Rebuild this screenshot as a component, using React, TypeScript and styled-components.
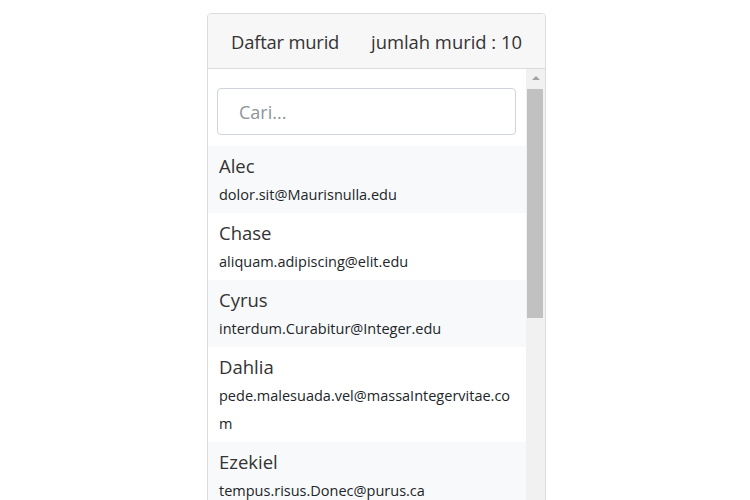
import React, { useState } from "react";
import styled, { createGlobalStyle } from "styled-components";

interface Murid {
  name: string;
  email: string;
}

const students: Murid[] = [
  { name: "Alec", email: "dolor.sit@Maurisnulla.edu" },
  { name: "Chase", email: "aliquam.adipiscing@elit.edu" },
  { name: "Cyrus", email: "interdum.Curabitur@Integer.edu" },
  { name: "Dahlia", email: "pede.malesuada.vel@massaIntegervitae.com" },
  { name: "Ezekiel", email: "tempus.risus.Donec@purus.ca" },
  { name: "Hedy", email: "lorem.ipsum@sodales.org" },
  { name: "Kirby", email: "nec.tempus@Nullamvelit.net" },
  { name: "Leila", email: "ac.mattis@consequat.co.uk" },
  { name: "Odessa", email: "felis.purus@ametrisus.com" },
  { name: "Zane", email: "vitae.erat@euismod.edu" },
];

const GlobalStyle = createGlobalStyle`
  html, body {
    margin: 0;
    overflow: hidden;
    background: #fff;
  }
  body {
    font-family: "Open Sans", "Noto Sans", sans-serif;
    color: #212529;
  }
`;

const Page = styled.div`
  display: flex;
  justify-content: center;
  padding: 13px 0 0 3px;
`;

const Card = styled.div`
  width: 337px;
  border: 1px solid #dcdcdc;
  border-radius: 4px;
  background: #fff;
  overflow: hidden;
`;

const Header = styled.div`
  display: flex;
  justify-content: space-between;
  align-items: center;
  height: 54px;
  padding: 0 23px 0 23px;
  background: #f7f7f7;
  border-bottom: 1px solid #dcdcdc;
  font-size: 18.4px;
  color: #333;
  letter-spacing: -0.2px;
`;

const Count = styled.span`
  letter-spacing: 0;
`;

const Body = styled.div`
  display: flex;
  height: 440px;
`;

const Content = styled.div`
  flex: 1;
  min-width: 0;
  overflow: hidden;
`;

const ScrollTrack = styled.div`
  display: flex;
  flex-direction: column;
  width: 19px;
  background: #f1f1f1;
`;

const ScrollArrow = styled.div`
  display: flex;
  justify-content: center;
  align-items: center;
  height: 17px;
  padding-left: 1px;

  &::before {
    content: "";
    border-left: 4px solid transparent;
    border-right: 4px solid transparent;
    border-bottom: 4px solid #a3a3a3;
  }
`;

const ScrollThumb = styled.div`
  height: 229px;
  margin: 3px 2px 0 1px;
  background: #c1c1c1;
`;

const SearchWrap = styled.div`
  padding: 19px 10px 11px 9px;
`;

const Search = styled.input`
  box-sizing: border-box;
  width: 100%;
  height: 47px;
  padding: 0 21px;
  border: 1px solid #ced4da;
  border-radius: 4px;
  font-family: inherit;
  font-size: 18px;
  color: #495057;
  outline: none;

  &::placeholder {
    color: #8e959b;
  }
`;

const List = styled.ul`
  list-style: none;
  margin: 0;
  padding: 0;
`;

const Item = styled.li<{ $striped: boolean }>`
  padding: 6px 11px 4px;
  background: ${(p) => (p.$striped ? "#f8f9fa" : "#fff")};
`;

const Name = styled.div`
  font-size: 18.5px;
  line-height: 28px;
  color: #333;
`;

const Email = styled.div`
  margin-top: 1px;
  font-size: 14.5px;
  line-height: 28px;
  color: #212529;
  word-break: break-all;
`;

export default function App() {
  const [query, setQuery] = useState("");
  const shown = students.filter((s) =>
    s.name.toLowerCase().includes(query.toLowerCase())
  );

  return (
    <>
      <GlobalStyle />
      <Page>
        <Card>
          <Header>
            <span>Daftar murid</span>
            <Count>jumlah murid : {students.length}</Count>
          </Header>
          <Body>
            <Content>
              <SearchWrap>
                <Search
                  placeholder="Cari..."
                  value={query}
                  onChange={(e) => setQuery(e.target.value)}
                />
              </SearchWrap>
              <List>
                {shown.map((s, i) => (
                  <Item key={s.email} $striped={i % 2 === 0}>
                    <Name>{s.name}</Name>
                    <Email>{s.email}</Email>
                  </Item>
                ))}
              </List>
            </Content>
            <ScrollTrack>
              <ScrollArrow />
              <ScrollThumb />
            </ScrollTrack>
          </Body>
        </Card>
      </Page>
    </>
  );
}
